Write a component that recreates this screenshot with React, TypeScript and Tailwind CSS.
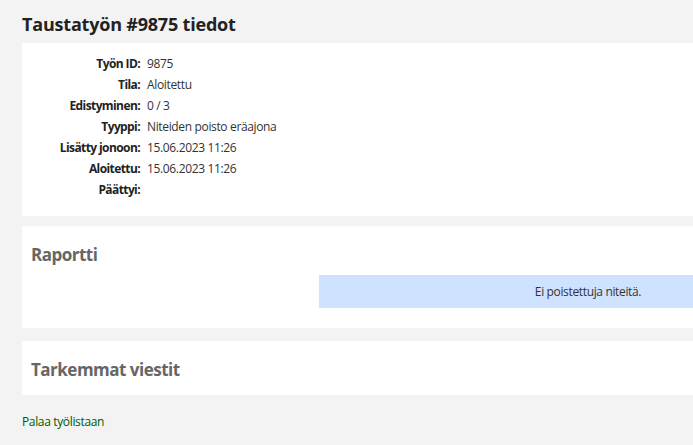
// Taustatyön tiedot — job detail page
const rows: [string, string][] = [
  ['Työn ID:', '9875'],
  ['Tila:', 'Aloitettu'],
  ['Edistyminen:', '0 / 3'],
  ['Tyyppi:', 'Niteiden poisto eräajona'],
  ['Lisätty jonoon:', '15.06.2023 11:26'],
  ['Aloitettu:', '15.06.2023 11:26'],
  ['Päättyi:', ''],
];

export default function App() {
  return (
    <div className="w-[693px] h-[445px] overflow-hidden bg-[#f2f3f2] font-['Open_Sans',sans-serif] text-[#222]">
      <div className="w-[857px] pl-[22px]">
        <h1 className="pt-[12px] h-[43px] text-[18px] font-bold leading-[24px] text-[#222] tracking-[-0.2px]">
          Taustatyön #9875 tiedot
        </h1>

        <div className="bg-white h-[173px] pt-[10px]">
          {rows.map(([label, value]) => (
            <div key={label} className="flex h-[21px] items-center text-[12px]">
              <span className="w-[118px] text-right font-bold text-[#222] tracking-[-0.6px]">{label}</span>
              <span className="pl-[7px] text-[#333] tracking-[-0.35px]">{value}</span>
            </div>
          ))}
        </div>

        <div className="mt-[10px] bg-white h-[102px] pt-[17px]">
          <h2 className="pl-[9px] text-[17px] font-bold leading-[24px] text-[#666] tracking-[-0.5px]">Raportti</h2>
          <div className="ml-[297px] mt-[8px] h-[33px] bg-[#cfe2ff] flex items-center justify-center text-[12px] text-[#333] tracking-[-0.35px]">
            Ei poistettuja niteitä.
          </div>
        </div>

        <div className="mt-[13px] bg-white h-[54px] pt-[17px]">
          <h2 className="pl-[9px] text-[17px] font-bold leading-[24px] text-[#666] tracking-[-0.5px]">Tarkemmat viestit</h2>
        </div>

        <a href="#" className="block mt-[18px] text-[12px] text-[#005a00] tracking-[-0.35px]">
          Palaa työlistaan
        </a>
      </div>
    </div>
  );
}
